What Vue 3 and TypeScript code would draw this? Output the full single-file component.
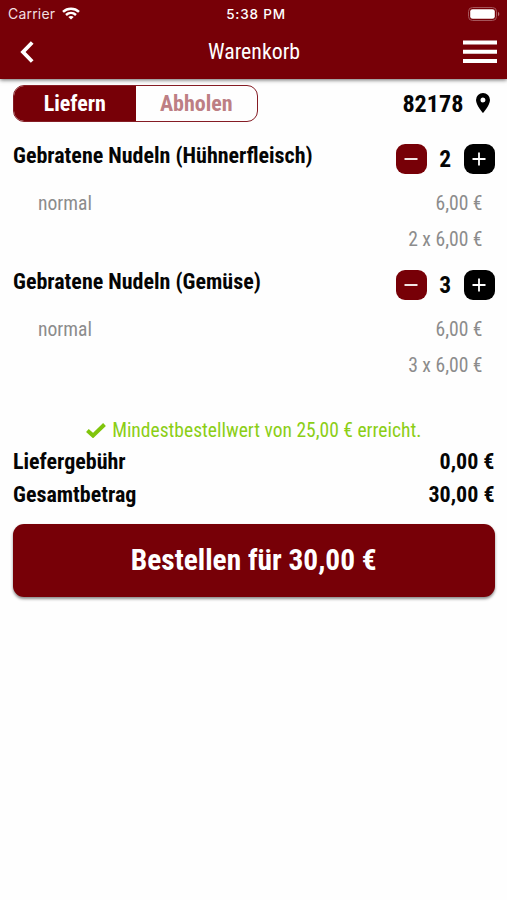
<script setup lang="ts">
import { computed, ref } from 'vue'

interface CartItem {
  id: number
  name: string
  variant: string
  price: number
  quantity: number
}

const mode = ref<'delivery' | 'pickup'>('delivery')
const items = ref<CartItem[]>([
  { id: 1, name: 'Gebratene Nudeln (Hühnerfleisch)', variant: 'normal', price: 6, quantity: 2 },
  { id: 2, name: 'Gebratene Nudeln (Gemüse)', variant: 'normal', price: 6, quantity: 3 },
])
const deliveryFee = 0
const minimum = 25

const total = computed(() => deliveryFee + items.value.reduce((sum, i) => sum + i.price * i.quantity, 0))

function euro(value: number): string {
  return `${value.toFixed(2).replace('.', ',')} €`
}

function change(item: CartItem, delta: number): void {
  item.quantity = Math.max(0, item.quantity + delta)
}
</script>

<template>
  <div class="screen">
    <header class="header">
      <div class="status">
        <div class="carrier">
          <span>Carrier</span>
          <svg class="wifi" viewBox="0 0 18 13" fill="none" stroke="#fff" stroke-width="2.5">
            <path d="M1 4.900C5.500.7 12.500.7 17 4.900" />
            <path d="M4 8c2.900-2.600 7.100-2.600 10 0" />
            <path d="M9 12.600 6.300 9.900c1.500-1.300 3.900-1.300 5.400 0z" fill="#fff" stroke="none" />
          </svg>
        </div>
        <span class="clock">5:38 PM</span>
        <svg class="battery" viewBox="0 0 32 14">
          <rect x=".5" y=".5" width="28" height="13" rx="4" fill="none" stroke="#a5555a" />
          <rect x="2.200" y="2.200" width="24.600" height="9.600" rx="2.400" fill="#fff" />
          <path d="M30 4.800c1.800.8 1.800 3.600 0 4.400z" fill="#b87579" />
        </svg>
      </div>
      <nav class="nav">
        <button class="icon-button" aria-label="Zurück">
          <svg class="back" viewBox="0 0 14 22" fill="none" stroke="#fff" stroke-width="3.800">
            <path d="M12.200 1.500 3 11l9.200 9.500" />
          </svg>
        </button>
        <h1 class="title">Warenkorb</h1>
        <button class="icon-button" aria-label="Menü">
          <svg class="menu" viewBox="0 0 34 24" fill="#fff">
            <path d="M0 .5h34v4H0zM0 9.700h34v4H0zM0 18.900h34v4H0z" />
          </svg>
        </button>
      </nav>
    </header>

    <main class="content">
      <div class="options">
        <div class="segment">
          <button :class="['tab', { active: mode === 'delivery' }]" @click="mode = 'delivery'">Liefern</button>
          <button :class="['tab', { active: mode === 'pickup' }]" @click="mode = 'pickup'">Abholen</button>
        </div>
        <div class="place">
          <span>82178</span>
          <svg class="pin" viewBox="0 0 14 20">
            <path fill-rule="evenodd" d="M7 0a7 7 0 0 0-7 7c0 5.200 7 13 7 13s7-7.800 7-13a7 7 0 0 0-7-7zm0 9.500a2.500 2.500 0 1 1 0-5 2.500 2.500 0 0 1 0 5z" />
          </svg>
        </div>
      </div>

      <section v-for="item in items" :key="item.id" class="item">
        <div class="item-head">
          <h2 class="item-name">{{ item.name }}</h2>
          <div class="stepper">
            <button class="step minus" aria-label="Weniger" @click="change(item, -1)">
              <svg viewBox="0 0 14 14" stroke="#fff" stroke-width="1.800"><path d="M.5 7h13" /></svg>
            </button>
            <span class="quantity">{{ item.quantity }}</span>
            <button class="step plus" aria-label="Mehr" @click="change(item, 1)">
              <svg viewBox="0 0 14 14" stroke="#fff" stroke-width="1.800"><path d="M.5 7h13M7 .5v13" /></svg>
            </button>
          </div>
        </div>
        <div class="detail">
          <span>{{ item.variant }}</span>
          <span>{{ euro(item.price) }}</span>
        </div>
        <div class="detail sum">
          <span>{{ item.quantity }} x {{ euro(item.price) }}</span>
        </div>
      </section>

      <p class="notice">
        <svg class="check" viewBox="0 0 20 15" fill="none" stroke="#80c50c" stroke-width="4">
          <path d="M1.400 7.600 7 12.600 18.500 1.500" />
        </svg>
        <span>Mindestbestellwert von {{ euro(minimum) }} erreicht.</span>
      </p>

      <div class="row"><span>Liefergebühr</span><span>{{ euro(deliveryFee) }}</span></div>
      <div class="row"><span>Gesamtbetrag</span><span>{{ euro(total) }}</span></div>

      <button class="order">Bestellen für {{ euro(total) }}</button>
    </main>
  </div>
</template>

<style>
body {
  background: #fefefe;
}
</style>

<style scoped>
.screen {
  min-height: 900px;
  background: #fefefe;
  color: #050505;
  font-family: 'Roboto Condensed', Roboto, sans-serif;
  font-stretch: 75%;
  font-size: 22px;
  line-height: 28px;
  white-space: nowrap;
}

button {
  padding: 0;
  border: 0;
  background: none;
  color: inherit;
  font: inherit;
  font-stretch: inherit;
}

svg {
  display: block;
}

h1,
h2,
p {
  margin: 0;
}

.header {
  height: 79px;
  background: #770007;
  color: #fff;
  box-shadow: 0 1px 4px rgba(0, 0, 0, 0.6);
}

.status {
  display: grid;
  grid-template-columns: 1fr auto 1fr;
  align-items: center;
  height: 27px;
  padding: 0 7px 0 8px;
  font-family: Inter, sans-serif;
  font-stretch: normal;
  font-size: 14px;
}

.carrier {
  display: flex;
  align-items: center;
  gap: 7px;
  color: #f1dfe0;
  letter-spacing: 0.2px;
}

.wifi {
  width: 18px;
  height: 13px;
  margin-top: -1px;
}

.clock {
  margin-left: 4px;
  font-size: 13.5px;
  font-weight: 500;
  letter-spacing: 0.8px;
}

.battery {
  width: 32px;
  height: 14px;
  margin-top: -1px;
  justify-self: end;
}

.nav {
  display: grid;
  grid-template-columns: 1fr auto 1fr;
  align-items: center;
  height: 50px;
  padding: 0 10px 0 20px;
}

.back {
  width: 14px;
  height: 22px;
}

.menu {
  width: 34px;
  height: 24px;
}

.icon-button:last-child {
  justify-self: end;
}

.title {
  margin-right: 9px;
  font-size: 21.8px;
  font-weight: 400;
}

.content {
  padding: 6px 12.5px 0 13px;
}

.options {
  display: flex;
  justify-content: space-between;
  align-items: center;
  height: 37px;
}

.segment {
  box-sizing: border-box;
  display: flex;
  width: 245px;
  height: 37px;
  border: 1px solid #851c24;
  border-radius: 11px;
  overflow: hidden;
}

.tab {
  flex: 1;
  color: #bd7f84;
  font-weight: 700;
}

.tab.active {
  background: #770007;
  color: #fff;
}

.place {
  display: flex;
  align-items: center;
  gap: 12px;
  padding-right: 5px;
  font-size: 24.2px;
  font-weight: 700;
}

.pin {
  width: 14px;
  height: 20px;
  margin-top: -2px;
}

.item {
  height: 126px;
}

.item-head {
  display: flex;
  justify-content: space-between;
  align-items: flex-start;
  height: 64px;
  padding-top: 21.5px;
  box-sizing: border-box;
}

.item-name {
  margin-top: -2px;
  font-size: 22px;
  font-weight: 700;
}

.stepper {
  display: flex;
  align-items: center;
}

.step {
  display: grid;
  place-items: center;
  width: 30.5px;
  height: 30.5px;
  border-radius: 9px;
}

.step svg {
  width: 14px;
  height: 14px;
}

.minus {
  background: #770007;
}

.plus {
  background: #000;
}

.quantity {
  width: 37.5px;
  text-align: center;
  font-size: 23.5px;
  font-weight: 700;
}

.detail {
  display: flex;
  justify-content: space-between;
  align-items: center;
  height: 36px;
  padding: 0 12px 0 25px;
  color: #8c8c8c;
  font-size: 19.6px;
}

.sum {
  justify-content: flex-end;
}

.notice {
  display: flex;
  justify-content: center;
  align-items: center;
  gap: 6px;
  height: 33px;
  margin-top: 40px;
  margin-bottom: -2px;
  color: #8bce16;
  font-size: 19.55px;
}

.check {
  width: 20px;
  height: 15px;
}

.row {
  display: flex;
  justify-content: space-between;
  align-items: center;
  height: 33px;
  font-weight: 700;
}

.order {
  display: block;
  width: 100%;
  height: 73px;
  margin-top: 13px;
  padding-bottom: 2px;
  border-radius: 11px;
  background: #770007;
  color: #fff;
  font-size: 29.4px;
  font-weight: 700;
  box-shadow: 0 2px 3px rgba(0, 0, 0, 0.45);
}
</style>
